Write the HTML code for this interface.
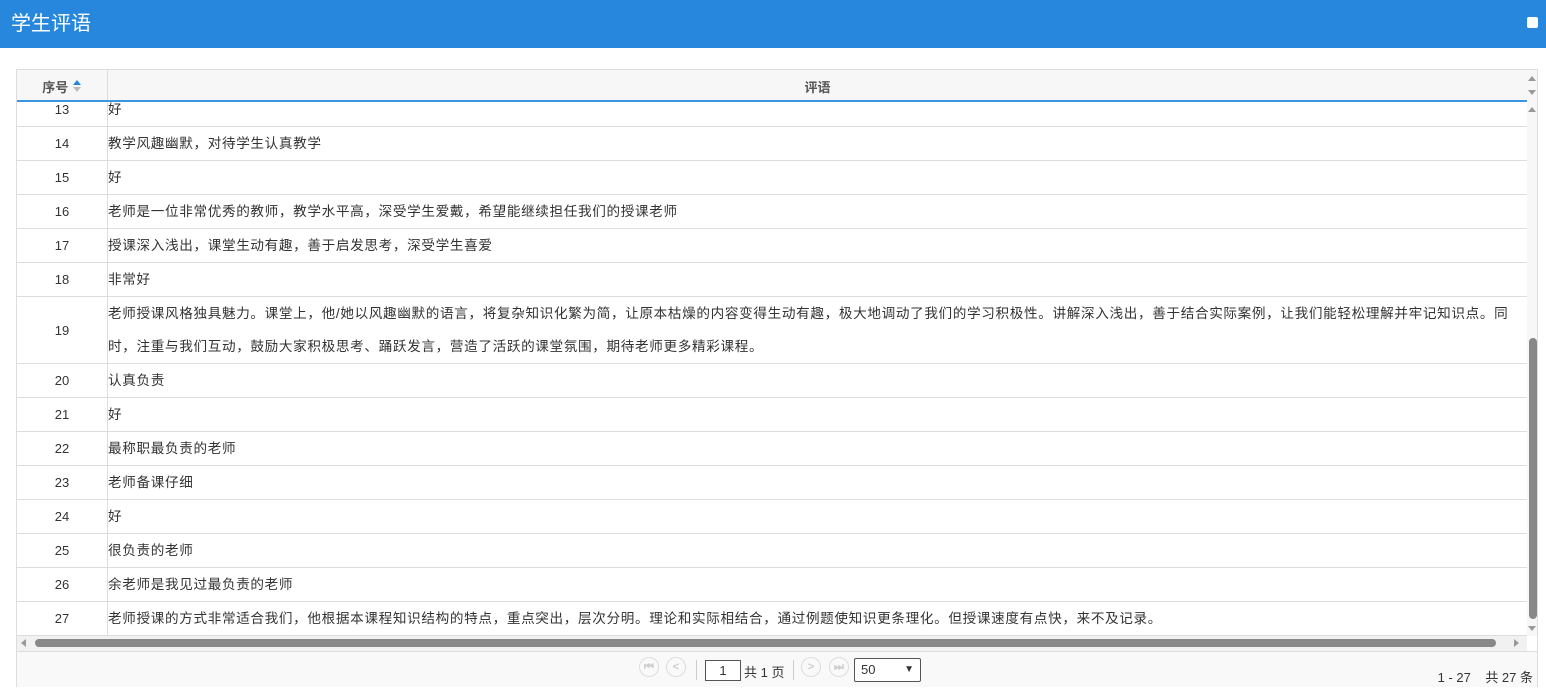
<!DOCTYPE html>
<html><head><meta charset="utf-8"><style>
*{margin:0;padding:0;box-sizing:border-box}
body{width:1546px;height:692px;background:#fff;font-family:"Liberation Sans","Noto Sans CJK SC",sans-serif;position:relative;overflow:hidden;color:#333}
.hd{position:absolute;left:0;top:0;width:1546px;height:48px;background:#2687dc;color:#fff;font-size:20px;line-height:48px;padding-left:11px}
.hd i{position:absolute;right:8px;top:17px;width:11px;height:11px;background:#fff;border-radius:2px}
.grid{position:absolute;left:16px;top:69px;width:1522px;height:618px;border:1px solid #ddd}
.th{position:absolute;left:0;top:0;width:1510px;height:32px;background:#f7f7f7;border-bottom:2px solid #3c95e0;font-size:13px;font-weight:bold;color:#555}
.th div{position:absolute;top:0;height:30px;line-height:36px;text-align:center}
.body{position:absolute;left:0;top:32px;width:1510px;height:534px;overflow:hidden}
.in{position:absolute;left:0;top:-9px;width:1510px}
.r{display:flex;border-bottom:1px solid #ddd;font-size:13px;min-height:34px}
.r .n{width:91px;border-right:1px solid #ddd;text-align:center;display:flex;align-items:center;justify-content:center}
.r .t{flex:1;line-height:33px;padding-right:0;font-size:13.6px;letter-spacing:0.65px}
.vs{position:absolute;left:1510px;top:0;width:10px;height:566px;background:#f1f1f1}
.hs{position:absolute;left:0;top:566px;width:1510px;height:15px;background:#f1f1f1}
.pg{position:absolute;left:0;top:581px;width:1520px;height:36px;background:#f9f9f9;border-top:1px solid #ddd;font-size:13px}
.tri{position:absolute;width:0;height:0;border-left:4px solid transparent;border-right:4px solid transparent}
.cb{position:absolute;top:5px;width:20px;height:20px;border-radius:50%;border:1px solid #ddd;color:#ccc;font-size:11px;text-align:center;line-height:18px;font-weight:bold}
</style></head><body>
<div class="hd">学生评语<i></i></div>
<div class="grid">
 <div class="th"><div style="left:0;width:91px;border-right:1px solid #ddd;height:30px">序号 <span style="display:inline-block;vertical-align:middle;position:relative;width:10px;height:14px;top:-2px"><span class="tri" style="left:1px;top:0;border-bottom:5px solid #2687dc"></span><span class="tri" style="left:1px;top:7px;border-top:5px solid #bbb"></span></span></div><div style="left:91px;width:1419px">评语</div></div>
 <div class="body"><div class="in">
 <div class="r"><div class="n">13</div><div class="t">好</div></div>
 <div class="r"><div class="n">14</div><div class="t">教学风趣幽默，对待学生认真教学</div></div>
 <div class="r"><div class="n">15</div><div class="t">好</div></div>
 <div class="r"><div class="n">16</div><div class="t">老师是一位非常优秀的教师，教学水平高，深受学生爱戴，希望能继续担任我们的授课老师</div></div>
 <div class="r"><div class="n">17</div><div class="t">授课深入浅出，课堂生动有趣，善于启发思考，深受学生喜爱</div></div>
 <div class="r"><div class="n">18</div><div class="t">非常好</div></div>
 <div class="r"><div class="n">19</div><div class="t" style="white-space:nowrap">老师授课风格独具魅力。课堂上，他/她以风趣幽默的语言，将复杂知识化繁为简，让原本枯燥的内容变得生动有趣，极大地调动了我们的学习积极性。讲解深入浅出，善于结合实际案例，让我们能轻松理解并牢记知识点。同<br>时，注重与我们互动，鼓励大家积极思考、踊跃发言，营造了活跃的课堂氛围，期待老师更多精彩课程。</div></div>
 <div class="r"><div class="n">20</div><div class="t">认真负责</div></div>
 <div class="r"><div class="n">21</div><div class="t">好</div></div>
 <div class="r"><div class="n">22</div><div class="t">最称职最负责的老师</div></div>
 <div class="r"><div class="n">23</div><div class="t">老师备课仔细</div></div>
 <div class="r"><div class="n">24</div><div class="t">好</div></div>
 <div class="r"><div class="n">25</div><div class="t">很负责的老师</div></div>
 <div class="r"><div class="n">26</div><div class="t">余老师是我见过最负责的老师</div></div>
 <div class="r"><div class="n">27</div><div class="t" style="white-space:nowrap">老师授课的方式非常适合我们，他根据本课程知识结构的特点，重点突出，层次分明。理论和实际相结合，通过例题使知识更条理化。但授课速度有点快，来不及记录。</div></div>
 </div></div>
 <div class="vs" style="background:#f7f7f7"><span class="tri" style="left:1px;top:6px;border-bottom:5px solid #999"></span><span class="tri" style="left:1px;top:20px;border-top:5px solid #999"></span><span class="tri" style="left:1px;top:37px;border-bottom:5px solid #999"></span><div style="position:absolute;left:2px;top:268px;width:8px;height:281px;background:#888;border-radius:4px"></div><span class="tri" style="left:1px;top:556px;border-top:5px solid #999"></span></div>
 <div class="hs"><span style="position:absolute;left:4px;top:3px;border-top:4px solid transparent;border-bottom:4px solid transparent;border-right:5px solid #999"></span><div style="position:absolute;left:18px;top:3px;width:1461px;height:8px;background:#888;border-radius:4px"></div><span style="position:absolute;left:1497px;top:3px;border-top:4px solid transparent;border-bottom:4px solid transparent;border-left:5px solid #999"></span></div>
 <div class="pg">
  <div class="cb" style="left:622px">⏮</div><div class="cb" style="left:649px">&lt;</div>
  <div style="position:absolute;left:679px;top:8px;width:1px;height:20px;background:#ccc"></div>
  <div style="position:absolute;left:688px;top:8px;width:36px;height:21px;border:1px solid #555;background:#fff;text-align:center;line-height:19px">1</div>
  <div style="position:absolute;left:727px;top:10px">共 1 页</div>
  <div style="position:absolute;left:776px;top:8px;width:1px;height:20px;background:#ccc"></div>
  <div class="cb" style="left:784px">&gt;</div><div class="cb" style="left:812px">⏭</div>
  <div style="position:absolute;left:837px;top:6px;width:67px;height:24px;border:1px solid #555;background:#fff;border-radius:2px;padding-left:6px;line-height:22px">50<span style="position:absolute;right:6px;top:0;font-size:10px">&#9660;</span></div>
  <div style="position:absolute;right:4px;top:15px">1 - 27&nbsp;&nbsp;&nbsp; 共 27 条</div>
 </div>
</div>
</body></html>
